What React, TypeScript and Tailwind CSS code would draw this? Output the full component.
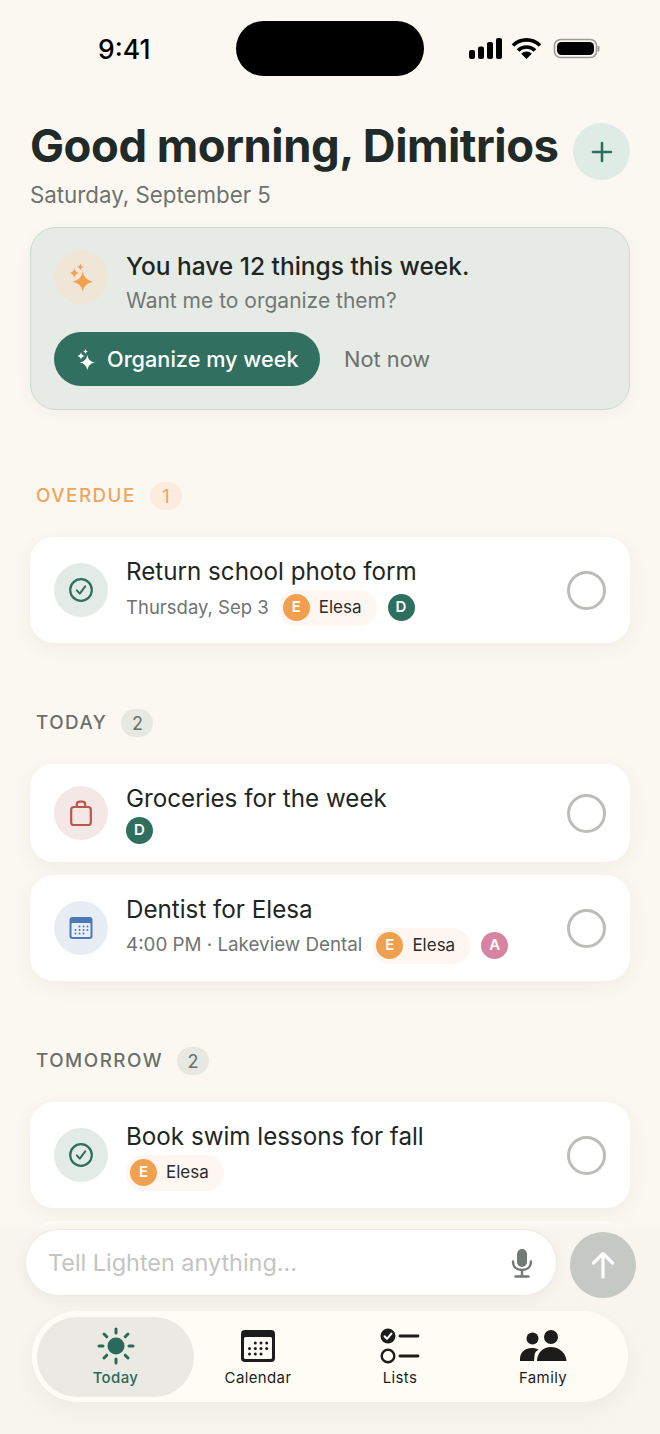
import type { ReactNode } from 'react';

const CheckIcon = () => (
  <svg width="26" height="26" viewBox="0 0 26 26" fill="none" stroke="#2f6f5e" strokeLinecap="round" strokeLinejoin="round">
    <circle cx="13" cy="13" r="10.8" strokeWidth="2.2" />
    <path d="M8.8 13.4l3 3.2 5.4-7.2" strokeWidth="2" />
  </svg>
);

const BagIcon = () => (
  <svg width="26" height="28" viewBox="0 0 26 28" fill="none" stroke="#b9574c" strokeWidth="2.2" strokeLinejoin="round">
    <rect x="3.2" y="8" width="19.6" height="18" rx="2.6" />
    <path d="M8.8 8V5.6A3 3 0 0 1 11.8 2.6h2.4a3 3 0 0 1 3 3V8" />
  </svg>
);

const CalendarSmall = () => (
  <svg width="24" height="24" viewBox="0 0 24 24">
    <rect x="0.5" y="1" width="23" height="22" rx="3" fill="#4b79b8" />
    <rect x="2.5" y="7" width="19" height="14" rx="1" fill="#e9eef7" />
    <g fill="#4b79b8">
      {[10.5, 14, 17.5].map(y => [6.5, 10.5, 14.5, 18.5].map(x => (
        (y === 10.5 && x === 6.5) || (y === 17.5 && x === 18.5) ? null : <circle key={`${x}-${y}`} cx={x} cy={y} r="1" />
      )))}
    </g>
  </svg>
);

// four point star, concave sides
const star = (cx: number, cy: number, r: number) => {
  const k = r * 0.14;
  return `M${cx} ${cy - r}Q${cx + k} ${cy - k} ${cx + r} ${cy}Q${cx + k} ${cy + k} ${cx} ${cy + r}Q${cx - k} ${cy + k} ${cx - r} ${cy}Q${cx - k} ${cy - k} ${cx} ${cy - r}Z`;
};

const Sparkles = ({ color, size }: { color: string; size: number }) => (
  <svg width={size} height={size} viewBox="0 0 24 24" fill={color}>
    <path d={star(13.3, 15.5, 7.6)} />
    <path d={star(7, 9, 3.8)} />
    <path d={star(11.5, 4.5, 2.4)} />
  </svg>
);

const Avatar = ({ letter, color }: { letter: string; color: string }) => (
  <span className={`flex h-[27px] w-[27px] shrink-0 items-center justify-center rounded-full text-[15px] font-semibold text-white ${color}`}>
    {letter}
  </span>
);

const ElesaChip = () => (
  <span className="flex h-[36px] items-center gap-[9px] rounded-full bg-[#fdf6f1] pl-[4px] pr-[15px] text-[17px] text-[#2a2d2b]">
    <Avatar letter="E" color="bg-[#f0a04f]" />
    Elesa
  </span>
);

const Task = ({ icon, iconBg, title, height, children }: { icon: ReactNode; iconBg: string; title: string; height: string; children: ReactNode }) => (
  <div className={`flex items-center rounded-[24px] bg-white pl-[24px] pr-[24px] shadow-[0_6px_20px_rgba(70,60,40,0.06)] ${height}`}>
    <div className={`flex h-[54px] w-[54px] shrink-0 items-center justify-center rounded-full ${iconBg}`}>{icon}</div>
    <div className="ml-[18px] flex min-w-0 flex-1 flex-col">
      <div className="text-[24.2px] leading-[34px] text-[#1e2624]">{title}</div>
      <div className="mt-[1px] flex items-center">{children}</div>
    </div>
    <div className="h-[39px] w-[39px] shrink-0 rounded-full border-[3px] border-[#bcbdb9]" />
  </div>
);

const Section = ({ label, count, orange, mt, children }: { label: string; count: number; orange?: boolean; mt: string; children: ReactNode }) => (
  <div className={mt}>
    <div className="flex h-[28px] items-center pl-[6px]">
      <span className={`text-[18.8px] font-medium tracking-[0.08em] ${orange ? 'text-[#efa55c]' : 'text-[#69706b]'}`}>{label}</span>
      <span className={`ml-[14px] flex h-[28px] w-[32px] items-center justify-center rounded-full text-[18px] ${orange ? 'bg-[#fbecdd] text-[#efa55c]' : 'bg-[#e8e8e3] text-[#69706b]'}`}>{count}</span>
    </div>
    <div className="mt-[27px] flex flex-col gap-[13px]">{children}</div>
  </div>
);

const NavItem = ({ width, label, active, children }: { width: string; label: string; active?: boolean; children: ReactNode }) => (
  <div className={`flex h-[80px] shrink-0 flex-col items-center rounded-[40px] pt-[10px] ${width} ${active ? 'bg-[#ebe9e3] font-medium text-[#2a6a58]' : 'font-normal text-[#1c1c1a]'}`}>
    <div className="flex h-[38px] items-center justify-center">{children}</div>
    <span className="mt-[3px] text-[15px] leading-[20px] tracking-[0.025em]">{label}</span>
  </div>
);

export default function App() {
  return (
    <div className="relative h-[1434px] w-[660px] overflow-hidden bg-[#fbf8f1] [font-family:Inter,'Liberation_Sans',sans-serif]">
      {/* status bar */}
      <div className="relative h-[76px]">
        <span className="absolute left-[98px] top-[33px] text-[26.5px] font-medium leading-[32px] text-black">9:41</span>
        <div className="absolute left-[236px] top-[21px] h-[55px] w-[188px] rounded-full bg-black" />
        <svg className="absolute left-[466px] top-[36px]" width="134" height="26" viewBox="0 0 134 26" fill="#000">
          <rect x="3" y="14" width="6" height="9" rx="2" />
          <rect x="12" y="10.5" width="6" height="12.5" rx="2" />
          <rect x="21" y="6" width="6" height="17" rx="2" />
          <rect x="30" y="2" width="6" height="21" rx="2" />
          <path d="M47 9.5a19 19 0 0 1 27 0" fill="none" stroke="#000" strokeWidth="3.6" />
          <path d="M52 14.5a12 12 0 0 1 17 0" fill="none" stroke="#000" strokeWidth="3.6" />
          <path d="M60.5 23l-5.3-5.3a7.5 7.5 0 0 1 10.6 0z" />
          <rect x="88.5" y="3.5" width="42" height="18" rx="6" fill="none" stroke="#9b9a94" strokeWidth="1.6" />
          <rect x="91" y="6" width="37" height="13" rx="4.5" />
          <rect x="131.5" y="10" width="2" height="5.5" rx="1" fill="#9b9a94" />
        </svg>
      </div>

      <div className="px-[30px]">
        {/* header */}
        <div className="flex items-start justify-between pt-[44px]">
          <div>
            <h1 className="whitespace-nowrap text-[45.4px] font-bold leading-[52px] tracking-[-0.01em] text-[#202a28]">Good morning, Dimitrios</h1>
            <p className="mt-[8px] text-[22.3px] leading-[30px] text-[#6c7470]">Saturday, September 5</p>
          </div>
          <div className="mt-[3px] flex h-[57px] w-[57px] shrink-0 items-center justify-center rounded-full bg-[#dfece6]">
            <svg width="24" height="24" viewBox="0 0 24 24" fill="none" stroke="#2f6f5e" strokeWidth="2.6" strokeLinecap="round">
              <path d="M12 3v18M3 12h18" />
            </svg>
          </div>
        </div>

        {/* organize card */}
        <div className="mt-[17px] h-[183px] rounded-[26px] border border-[#c9dcd2] bg-[#e6ebe6] px-[23px] pt-[22px] shadow-[0_4px_16px_rgba(70,60,40,0.04)]">
          <div className="flex">
            <div className="flex h-[54px] w-[54px] shrink-0 items-center justify-center rounded-full bg-[#f0e6d8]">
              <Sparkles color="#f2a24f" size={32} />
            </div>
            <div className="ml-[18px]">
              <div className="text-[24.5px] font-medium leading-[32px] text-[#1e2624]">You have 12 things this week.</div>
              <div className="mt-[4px] text-[21px] leading-[30px] text-[#717874]">Want me to organize them?</div>
            </div>
          </div>
          <div className="mt-[16px] flex items-center">
            <button className="flex h-[54px] w-[266px] items-center rounded-full bg-[#316f60] pl-[20px] text-[21.7px] font-medium text-white">
              <Sparkles color="#fff" size={24} />
              <span className="ml-[9px]">Organize my week</span>
            </button>
            <span className="ml-[24px] text-[21.8px] text-[#6c706c]">Not now</span>
          </div>
        </div>

        <Section label="OVERDUE" count={1} orange mt="mt-[72px]">
          <Task icon={<CheckIcon />} iconBg="bg-[#e3ebe7]" title="Return school photo form" height="h-[106px]">
            <span className="text-[18.5px] text-[#6f7472]">Thursday, Sep 3</span>
            <span className="ml-[10px]"><ElesaChip /></span>
            <span className="ml-[11px]"><Avatar letter="D" color="bg-[#2f6f5e]" /></span>
          </Task>
        </Section>

        <Section label="TODAY" count={2} mt="mt-[66px]">
          <Task icon={<BagIcon />} iconBg="bg-[#f4e8e6]" title="Groceries for the week" height="h-[98px]">
            <Avatar letter="D" color="bg-[#2f6f5e]" />
          </Task>
          <Task icon={<CalendarSmall />} iconBg="bg-[#e8edf5]" title="Dentist for Elesa" height="h-[106px]">
            <span className="whitespace-nowrap text-[18.8px] text-[#6f7472]">4:00 PM · Lakeview Dental</span>
            <span className="ml-[10px]"><ElesaChip /></span>
            <span className="ml-[11px]"><Avatar letter="A" color="bg-[#d983a3]" /></span>
          </Task>
        </Section>

        <Section label="TOMORROW" count={2} mt="mt-[66px]">
          <Task icon={<CheckIcon />} iconBg="bg-[#e3ebe7]" title="Book swim lessons for fall" height="h-[106px]">
            <ElesaChip />
          </Task>
          <div className="h-[106px] rounded-[24px] bg-[#fdfbf6]" />
        </Section>
      </div>

      {/* composer + tab bar sit over the list */}
      <div className="absolute inset-x-0 bottom-0 h-[214px] bg-linear-to-b from-transparent to-[#f7f5ee] to-[6%] pl-[25px] pr-[24px] pt-[9px]">
        <div className="flex items-start">
          <div className="flex h-[67px] w-[532px] items-center justify-between rounded-full border border-[#ecebe4] bg-white pl-[22px] pr-[22px] shadow-[0_4px_14px_rgba(70,60,40,0.06)]">
            <span className="text-[23.4px] text-[#c4c4c1]">Tell Lighten anything...</span>
            <svg width="24" height="30" viewBox="0 0 24 30" fill="none" stroke="#727a76" strokeWidth="2.4" strokeLinecap="round">
              <rect x="7" y="1" width="10" height="18" rx="5" fill="#727a76" stroke="none" />
              <path d="M3 13.5c0 5.5 4 8.5 9 8.5s9-3 9-8.5M12 22v6M5.5 28.5h13" />
            </svg>
          </div>
          <div className="ml-[13px] mt-[3px] flex h-[66px] w-[66px] items-center justify-center rounded-full bg-[#c6c8c3]">
            <svg width="26" height="28" viewBox="0 0 26 28" fill="none" stroke="#fff" strokeWidth="3.2" strokeLinecap="round" strokeLinejoin="round">
              <path d="M13 26V2.5M3.5 12L13 2.5 22.5 12" />
            </svg>
          </div>
        </div>

        <div className="ml-[7px] mt-[13px] flex h-[91px] w-[596px] items-center rounded-[46px] bg-[#fdfcf5] pl-[5px] shadow-[0_8px_24px_rgba(70,60,40,0.05)]">
          <NavItem width="w-[157px]" label="Today" active>
            <svg width="38" height="38" viewBox="0 0 38 38" fill="none" stroke="#2a6a58" strokeWidth="3" strokeLinecap="round">
              <circle cx="19" cy="19" r="8.5" fill="#2a6a58" stroke="none" />
              <path d="M19 2v4M19 32v4M2 19h4M32 19h4M7 7l2.8 2.8M28.2 28.2L31 31M7 31l2.8-2.8M28.2 9.8L31 7" />
            </svg>
          </NavItem>
          <NavItem width="w-[128px]" label="Calendar">
            <svg width="34" height="32" viewBox="0 0 34 32">
              <rect x="0" y="0" width="34" height="32" rx="4" fill="#1c1c1a" />
              <rect x="3" y="7" width="28" height="22" rx="1.5" fill="#fdfcf5" />
              <g fill="#1c1c1a">
                {[13, 18.5, 24].map(y => [8.5, 14.3, 20, 25.7].map(x => (
                  (y === 13 && x === 8.5) || (y === 24 && x === 25.7) ? null : <circle key={`${x}-${y}`} cx={x} cy={y} r="1.5" />
                )))}
              </g>
            </svg>
          </NavItem>
          <NavItem width="w-[156px]" label="Lists">
            <svg width="40" height="36" viewBox="0 0 40 36" fill="none">
              <circle cx="8" cy="8" r="7.5" fill="#1c1c1a" />
              <path d="M4.5 8.2l2.5 2.6 4.5-5.3" stroke="#fff" strokeWidth="2" strokeLinecap="round" strokeLinejoin="round" />
              <circle cx="8" cy="28" r="6.3" stroke="#1c1c1a" strokeWidth="2.4" />
              <path d="M20 8h18M20 28h18" stroke="#1c1c1a" strokeWidth="2.8" strokeLinecap="round" />
            </svg>
          </NavItem>
          <NavItem width="w-[130px]" label="Family">
            <svg width="48" height="32" viewBox="0 0 48 32" fill="#1c1c1a">
              <circle cx="13.5" cy="8.5" r="6" />
              <circle cx="32" cy="7" r="7" />
              <path d="M1 31c-.5-8 4-13 12-13 2.5 0 5 .6 6.5 1.8C14.5 22 16 26 15 31z" />
              <path d="M18 31c0-8 6-14 14-14s15 6 15.5 14z" />
            </svg>
          </NavItem>
        </div>
      </div>
    </div>
  );
}
